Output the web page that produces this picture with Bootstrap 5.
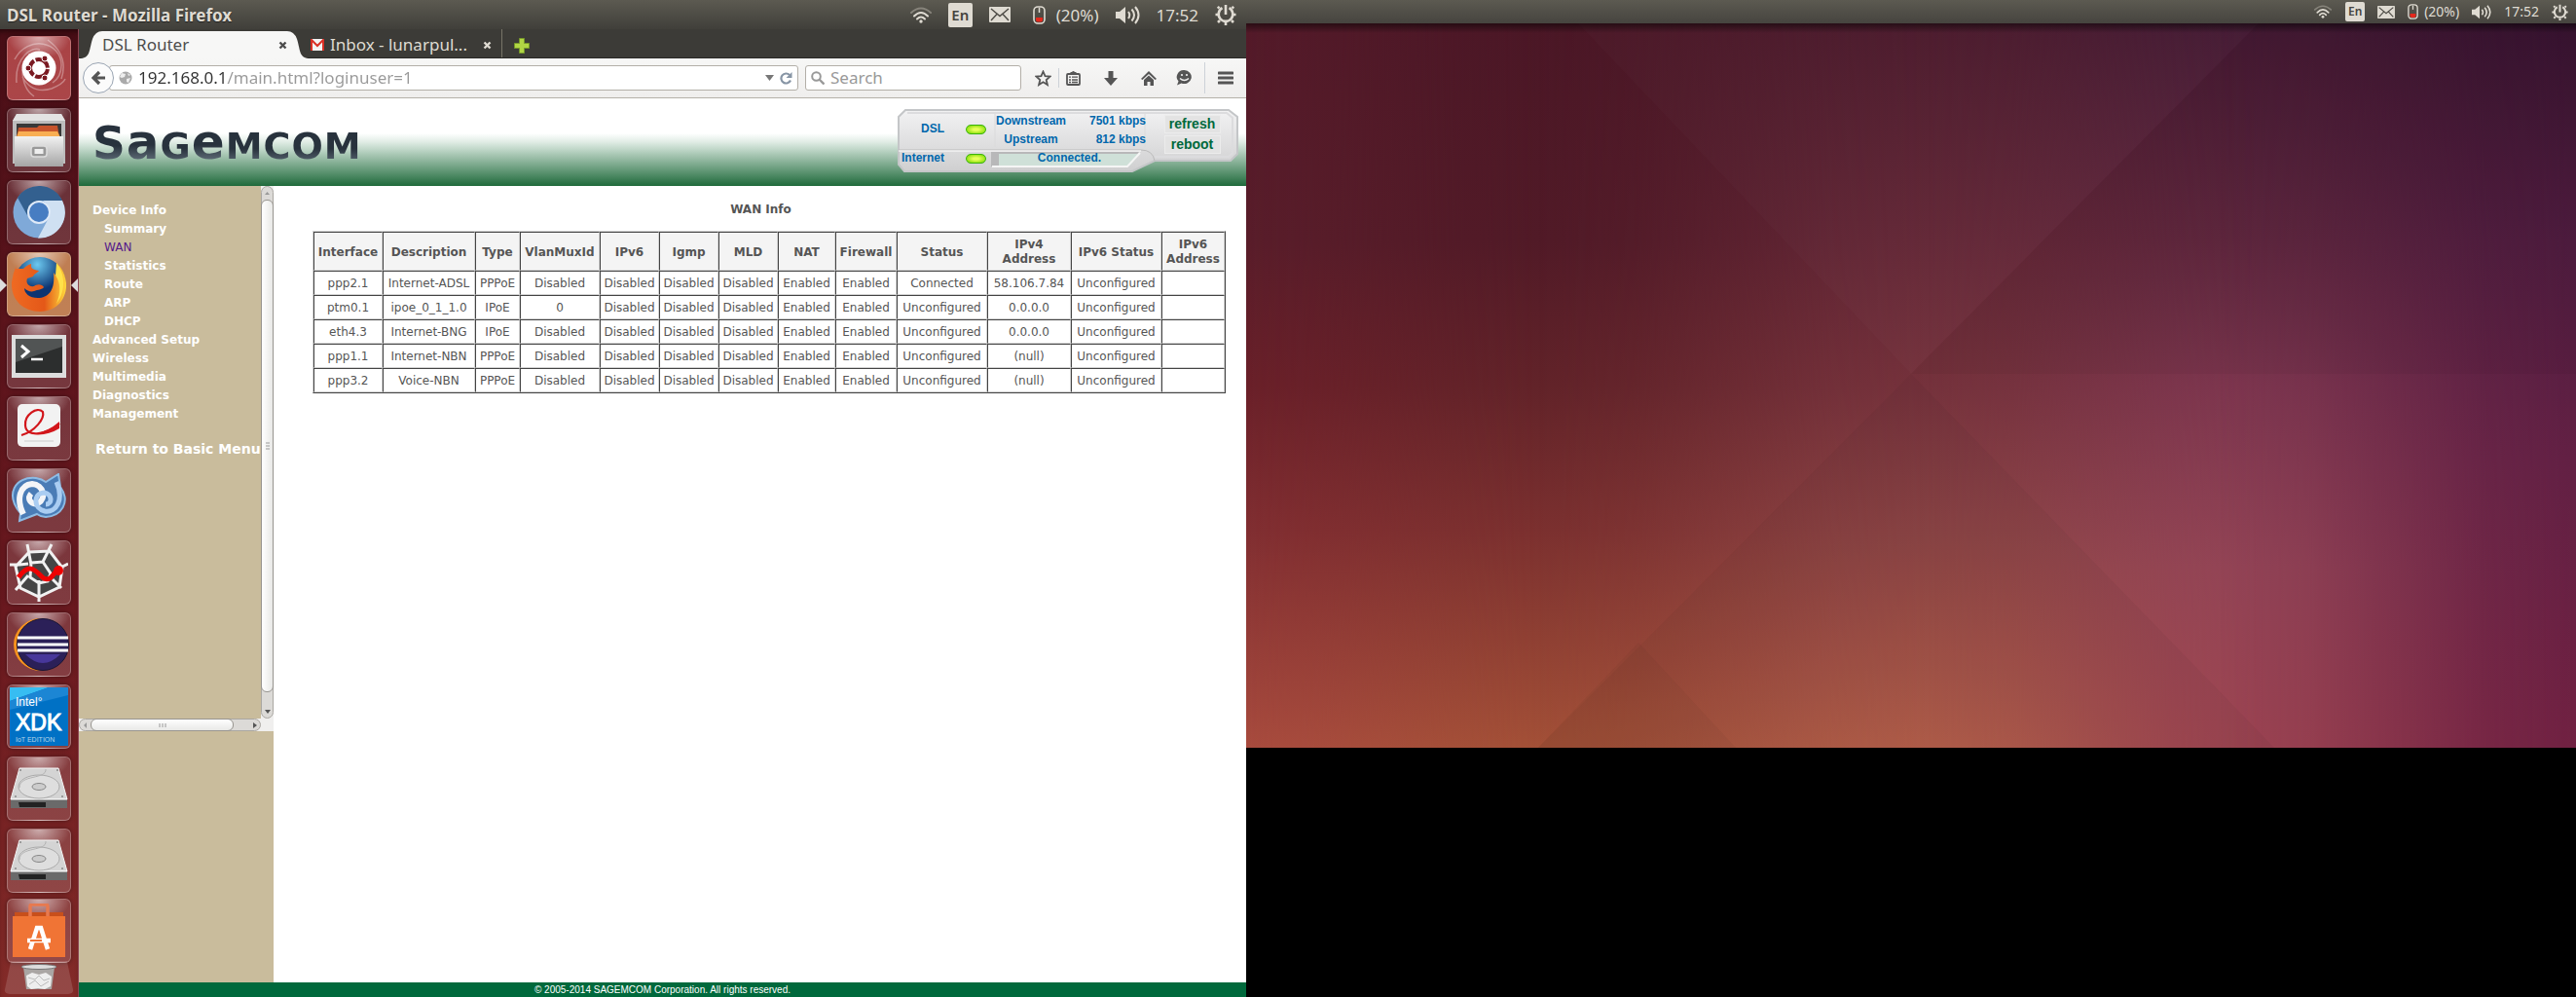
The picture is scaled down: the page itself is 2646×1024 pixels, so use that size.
<!DOCTYPE html>
<html lang="en">
<head>
<meta charset="utf-8">
<meta name="viewport" content="width=device-width, initial-scale=1">
<title>DSL Router - Mozilla Firefox</title>
<link href="https://cdn.jsdelivr.net/npm/bootstrap@5.3.0/dist/css/bootstrap.min.css" rel="stylesheet">
<style>
:root{--ui:"Noto Sans","Open Sans",sans-serif;--web:"DejaVu Sans",Verdana,sans-serif;--arial:"Liberation Sans",Arial,sans-serif}
body{background:#000;font-family:var(--ui);min-height:100vh}
button{font:inherit;color:inherit;background:none;border:0;padding:0}
svg{display:block;flex:none}
.desktop{display:grid;grid-template-columns:1280fr 1366fr;min-height:100vh}
.screen{display:flex;flex-direction:column;min-width:0}
/* top panels */
.panel{background:linear-gradient(#5c5a51,#403f3a);color:#dfdbd2;line-height:1;flex:none}
.panel-l{height:30px;font-size:17px;padding:0 10px 0 7px}
.panel-r{height:24px;font-size:14px;padding:0 8px;background:linear-gradient(#5c5a51,#46443f)}
.panel-l .tray{gap:17px}.panel-r .tray{gap:13px}
.panel-l .power{gap:11px;padding-left:6px}.panel-r .power{gap:6px}
.lang{background:#dfdbd2;color:#45443f;border-radius:2px;display:grid;place-items:center;font-weight:600}
.panel-l .lang{width:25px;height:25px;font-size:15px}.panel-r .lang{width:20px;height:20px;font-size:12px}
.wintitle{font-weight:700;text-shadow:0 1px 1px #222}
/* launcher */
.launcher{width:81px;flex:none;background:linear-gradient(#4a0f17,#5c141c 30%,#6a191f 60%,#832b28);border-right:1px solid #8d4552;padding:7px 0 0 7px;box-shadow:inset 0 6px 6px -4px #200508}
.launcher ul{display:flex;flex-direction:column;gap:8px;margin:0;padding:0;list-style:none}
.tile{position:relative;display:grid;place-items:center;width:66px;height:66px;border-radius:6px;border:1px solid #ffffff40;background:radial-gradient(ellipse 50% 36% at 50% 0,#ffffff99,#ffffff10),linear-gradient(#ffffff12,#ffffff18);box-shadow:0 0 5px #0006}
.tile-red{background-color:#9c2629}.tile-orange{background-color:#b56a38}
.tile-last{margin-top:-2px}
.tile-trash{height:34px;width:72px;margin:-10px 0 0 -3px;border:0;background:#ffffff24;clip-path:polygon(10% 0,90% 0,100% 100%,0 100%);box-shadow:none}
.pip{position:absolute;top:26px;border:7px solid transparent}
.pip-l{left:-8px;border-left-color:#ddd;border-right:0}
.pip-r{right:-8px;border-right-color:#ddd;border-left:0}
/* browser chrome */
.tabbar{height:30px;background:#3c3b37;color:#dfdbd2;font-size:17px;line-height:28px;border-bottom:1px solid #2a2926}
.btab{position:relative;display:flex;align-items:center}
.btab>*{position:relative}
.btab .tabshape{position:absolute;left:0;top:1px;width:100%;height:29px}
.btab-on{width:238px;padding:3px 24px 0 24px;color:#4c4c4c}
.btab-off{width:197px;gap:6px;padding:3px 10px 0 0;height:29px;border-right:1px solid #777468}
.navtools{height:41px;background:linear-gradient(#f7f7f6,#efeeed);border-bottom:1px solid #b5b1a9;padding:0 13px 0 4px;color:#555}
.urlbox,.searchbox{height:26px;background:#fff;border:1px solid #b3afa8;border-radius:3px;display:flex;align-items:center}
.urlbox{margin-left:-5px;padding:0 5px 0 9px;gap:6px;flex:1 1 0;min-width:0}
.searchbox{flex:0 1 222px;margin-left:7px;padding:0 5px;gap:6px}
.urlbox input,.searchbox input{border:0;outline:0;padding:0;flex:1 1 0;width:0;min-width:0;font-size:17px;line-height:24px;height:24px;background:none}
.urlbox input{color:transparent;background:linear-gradient(90deg,#333 92px,#999 92px);-webkit-background-clip:text;background-clip:text}
.searchbox input::placeholder{color:#999;opacity:1}
.backbtn{width:32px;height:32px;border-radius:50%;border:1px solid #9aa5b3;background:#fbfbfb;display:grid;place-items:center;z-index:1;flex:none}
.toolset{display:flex;align-items:center;margin-left:14px;gap:20px}
.toolset .pair{gap:7px}
.toolset .menugroup{gap:13px;margin-left:-8px}
.vline{width:1px;height:20px;background:#cdd2d8}
.menugroup .vline{height:32px}
/* router page */
.brandbar{height:90px;background:linear-gradient(#fff 0,#fff 40%,#dfece4 50%,#1f6a3b 100%);padding:11px 8px 0 14px}
.brandlogo{font-family:"DejaVu Sans",sans-serif;font-weight:700;line-height:54px;height:54px;margin-top:7px;font-size:38px;display:flex;align-items:baseline;color:#28323d;gap:1px}
.brandlogo .cap{font-size:47px}.brandlogo .low{font-size:50px}
.brandlogo span{background:linear-gradient(#28323d 55%,#5d6a75 85%);-webkit-background-clip:text;background-clip:text;color:transparent}
.statbox{position:relative;width:350px;height:65px;font:700 12px/17px var(--arial);color:#0067ac}
.statbox .plate{position:absolute;inset:0}
.statbox .inner{position:relative}
.statleft{width:255px;padding-top:4px}
.stattop{height:38px}.statlow{height:17px}
.lab{width:48px;text-align:right}.ledcell{width:50px;padding-left:22px}
.led{width:21px;height:10px;border-radius:5px;border:1px solid #3bb30d;background:radial-gradient(#e8ff5a 20%,#9be61a 70%,#4fc70c)}
.stattop dl{display:grid;grid-template-columns:78px 79px;margin:0}
.stattop dt{text-align:center;font-weight:700}.stattop dd{text-align:right;margin:0}
.statbtns{width:96px;padding-top:6px;gap:2px;color:#00693c;font-size:14px}
.statbtns button{width:58px;height:19px;line-height:17px;background:#e3e3e3;border:1px solid #ececec;font-weight:700}
.sidebar-col{width:200px;flex:none;background:#c9bc9c;font:700 12px/19px var(--web)}
.menuframe{display:grid;grid-template-columns:1fr 13px;grid-template-rows:547px 13px;background:#f0efee}
.menuview{background:#c9bc9c;overflow:hidden;padding:16px 0 0 14px;color:#fff;white-space:nowrap;min-width:0}
.menuview ul{list-style:none;margin:0;padding:0}.menuview ul ul{padding-left:12px}
.menuview a{color:#fff;text-decoration:none}
.menuview a.visited{color:#551a8b;font-weight:400}
.basic{display:block;font-size:14px;margin:17px 0 0 3px}
.sbar{background:#dcdad7;border:1px solid #aaa7a2;border-radius:7px;display:flex;align-items:center}
.sbar.vert{flex-direction:column}
.sbar .knob{background:linear-gradient(90deg,#fff,#e8e8e6);border:1px solid #989590;border-radius:6px;display:grid;place-items:center}
.vert .knob{width:13px;height:506px}.horiz .knob{height:13px;width:147px;background:linear-gradient(#fff,#e8e8e6)}
.sbar .cap-b{flex:none;width:11px;height:13px;display:grid;place-items:center}
.pagemain{background:#fff;flex:1;min-width:0;color:#555;font:12px/15px var(--web);padding:17px 20px 0 40px}
.pagemain h1{font:700 12px/15px var(--web);text-align:center;margin:0 18px 14px 0}
.wan-table{table-layout:fixed;width:938px;max-width:100%;border-collapse:separate;border-spacing:0;border:1px solid;border-color:#d3d3d3 #444 #444 #d3d3d3;text-align:center}
.wan-table th,.wan-table td{border:1px solid;border-color:#444 #d3d3d3 #d3d3d3 #444;padding:5px 2px 3px;height:25px}
.wan-table th{background:#f4f4f4;padding:5px 0 3px}
.pagefoot{height:15px;background:#00693c;color:#fff;font:10px/15px var(--arial);text-align:center}
.wallpaper{width:100%;height:auto;aspect-ratio:1366/744}
</style>
</head>
<body>
<svg width="0" height="0" class="position-absolute" aria-hidden="true">
<defs>
<symbol id="wifi" viewBox="0 0 22 17"><g fill="none" stroke-width="2" stroke-linecap="round"><path d="M1 6Q11-3 21 6" stroke="#87847b"/><path d="M4 9.500Q11 2.500 18 9.500M7 12.500Q11 8.500 15 12.500" stroke="#dfdbd2"/></g><circle cx="11" cy="15" r="1.700" fill="#dfdbd2"/></symbol>
<symbol id="mail" viewBox="0 0 22 16"><rect width="22" height="16" rx="1" fill="#dfdbd2"/><path d="M2 2l9 7.500L20 2M2 14l6-6.500M20 14l-6-6.500" fill="none" stroke="#4b4943" stroke-width="1.400"/></symbol>
<symbol id="mouse" viewBox="0 0 13 19"><rect x="1" y="1" width="11" height="17" rx="4" fill="none" stroke="#dfdbd2" stroke-width="1.600"/><path d="M6.500 2v5" stroke="#dfdbd2" stroke-width="1.500"/><path d="M3 12h7v3q-.5 1.500-2 1.500H5Q3.500 16.500 3 15z" fill="#e4281c"/></symbol>
<symbol id="sound" viewBox="0 0 25 21"><path d="M0 7h4l6-5v17l-6-5H0z" fill="#dfdbd2"/><path d="M13 7q2.500 3.500 0 7M16.500 4.500q5 6 0 12M20 2q7 8.500 0 17" fill="none" stroke="#dfdbd2" stroke-width="2"/></symbol>
<symbol id="gear" viewBox="0 0 22 22"><path d="M14.500 4.200A7.300 7.300 0 1 1 7.500 4.200" fill="none" stroke="#dfdbd2" stroke-width="2.600"/><path d="M11 1v10M4.500 4.500L2.800 2.800M17.500 4.500l1.700-1.700M3 11H.5M19 11h2.500M5 17l-2 2M17 17l2 2M11 19v3" stroke="#dfdbd2" stroke-width="2.600"/></symbol>
<linearGradient id="silver" x2="0" y2="1"><stop stop-color="#f2f2f2"/><stop offset="1" stop-color="#a5a5a5"/></linearGradient>
<symbol id="disk" viewBox="0 0 60 46"><path d="M10 2h40l9 32H1z" fill="#d4d4d4" stroke="#f5f5f5"/><path d="M1 34h58v9H1z" fill="#6a6a6a"/><path d="M1 34h58" stroke="#fff"/><path d="M9 37h28v5H10z" fill="#222"/><ellipse cx="30" cy="21" rx="21" ry="12" fill="#dedede" stroke="#aaa"/><ellipse cx="30" cy="21" rx="7" ry="3.500" fill="#ccc" stroke="#888"/><path d="M10 22C10 8 38 14 37 3" fill="none" stroke="#b2b2b2"/><g fill="#888"><circle cx="11" cy="4" r="1"/><circle cx="49" cy="4" r="1"/><circle cx="6" cy="31" r="1"/><circle cx="54" cy="31" r="1"/></g></symbol>
<symbol id="close" viewBox="0 0 9 9"><path d="M1.500 1.500l6 6m0-6l-6 6" stroke="currentColor" stroke-width="2.400"/></symbol>
</defs></svg>

<div class="desktop">
<div class="screen">
  <header class="panel panel-l d-flex align-items-center justify-content-between">
    <span class="wintitle">DSL Router - Mozilla Firefox</span>
    <div class="tray d-flex align-items-center">
      <svg width="22" height="17"><use href="#wifi"/></svg><span class="lang">En</span>
      <svg width="22" height="16"><use href="#mail"/></svg>
      <span class="power d-flex align-items-center"><svg width="13" height="19"><use href="#mouse"/></svg>(20%)</span>
      <svg width="25" height="21"><use href="#sound"/></svg><span>17:52</span>
      <svg width="22" height="22"><use href="#gear"/></svg>
    </div>
  </header>
  <div class="d-flex flex-grow-1">
    <nav class="launcher" aria-label="Launcher"><ul>
      <li><button class="tile tile-red" aria-label="Dash"><svg width="62" height="62" viewBox="0 0 62 62"><g fill="none" stroke="#ffffff55" stroke-width="1.500"><path d="M6 22C20-4 54 4 54 28q0 12-9 18M8 46C6 20 24 8 32 12M14 40q10 18 30 12 12-5 14-10M14 32q0 20 12 28M40 2q22 16 14 40"/></g><circle cx="31" cy="31" r="17.500" fill="#fff"/><circle cx="31" cy="31" r="9" fill="none" stroke="#7a1a22" stroke-width="4" stroke-dasharray="17 1.850" stroke-dashoffset="-1"/><g fill="#7a1a22" stroke="#fff"><circle cx="20" cy="31" r="3"/><circle cx="37" cy="21" r="3"/><circle cx="37" cy="41" r="3"/></g></svg></button></li>
      <li><button class="tile" aria-label="Files"><svg width="54" height="56" viewBox="0 0 54 56"><path d="M4 1h46l4 7v44H0V8z" fill="#bdbdbd"/><path d="M4 1h46l4 7H0z" fill="#e3e3e3"/><path d="M4 11h46v16H4z" fill="#383838"/><path d="M6 15h19l2-2h19l2 12H4z" fill="#c6542c"/><path d="M6 19h40l3 6H4z" fill="#f8ae52"/><path d="M2 24h50v31H2z" fill="url(#silver)"/><rect x="19" y="34" width="16" height="11" rx="3" fill="#999" stroke="#ddd" stroke-width="1.500"/><rect x="22.500" y="37" width="9" height="5" fill="#eee"/></svg></button></li>
      <li><button class="tile" aria-label="Chromium"><svg width="54" height="54" viewBox="0 0 54 54"><circle cx="27" cy="27" r="26.500" fill="#7fa9d8"/><path d="M5 12a26.500 26.500 0 0 1 46 3H27L15 30z" fill="#33608f"/><path d="M51 15a26.500 26.500 0 0 1-25 38.500L38 31q2-10-7-16z" fill="#cfe0f2"/><circle cx="27" cy="27" r="12" fill="#dfeaf8"/><circle cx="27" cy="27" r="10" fill="#477dc2"/></svg></button></li>
      <li><button class="tile tile-orange" aria-label="Firefox"><i class="pip pip-l"></i><i class="pip pip-r"></i><svg width="58" height="58" viewBox="0 0 58 58"><defs><radialGradient id="globe" cx=".45" cy=".15"><stop stop-color="#6cc9f0"/><stop offset="1" stop-color="#0c3472"/></radialGradient><linearGradient id="fur"><stop stop-color="#ef6a22"/><stop offset=".6" stop-color="#e45818"/><stop offset="1" stop-color="#ffd83c"/></linearGradient></defs><circle cx="30" cy="27" r="26" fill="url(#globe)"/><path d="M5 13L6 9Q2 18 1 27C0 46 14 57 30 57 48 57 58 43 57 28 56 18 52 11 47 7c3 8 1 11 0 14l-3-4c2 19-6 26-16 26-9 0-14-5-14-10 3 3 7 4 10 3 4-2 8-1 10-4-2-4-8-3-10-1-5 1-9-3-7-8l6-2c1-3 5-4 6-6-4-1-7-1-8-4V8c-4 1-6 3-8 5z" fill="url(#fur)"/><path d="M47 7c8 9 11 28 0 42 5-12 4-22-1-29z" fill="#ffe14a"/></svg></button></li>
      <li><button class="tile" aria-label="Terminal"><svg width="56" height="44" viewBox="0 0 56 44"><rect width="56" height="44" fill="#ddd"/><rect x="4" y="4" width="48" height="35" fill="#2c2e2e"/><path d="M4 4h48v8L4 28z" fill="#515454"/><path d="M10 11l7 6-7 6" fill="none" stroke="#fff" stroke-width="3"/><path d="M20 25h12" stroke="#fff" stroke-width="2.500"/></svg></button></li>
      <li><button class="tile" aria-label="Document viewer"><svg width="44" height="52" viewBox="0 0 44 52"><rect width="44" height="44" rx="5" y="1" fill="#f2f2f2"/><path d="M4 33C18 29 28 16 26 9 20 3 7 12 8 23c1 14 24 8 35-2" fill="none" stroke="#d2161b" stroke-width="2.200"/><path d="M43 19v7Q30 34 16 32 32 29 43 19z" fill="#d2161b"/><path d="M7 39h30" stroke="#ccc"/></svg></button></li>
      <li><button class="tile" aria-label="MonoDevelop"><svg width="58" height="56" viewBox="0 0 58 56"><path d="M9 49L10 41C-6 22 4 3 26 5q6 1 10 4L49 1l2 13C62 30 52 44 36 45q-5 0-9-3z" fill="#4a7cb6" stroke="#8dbbe4" stroke-width="2"/><path d="M13 42C5 26 10 12 22 11c12 1 15 15 6 20-7 2-12-5-7-10" fill="none" stroke="#f3f5f8" stroke-width="6"/><path d="M47 9c8 18 0 32-12 30-12-3-12-18-1-19 9 1 9 12 2 12" fill="none" stroke="#aacdf2" stroke-width="5"/></svg></button></li>
      <li><button class="tile" aria-label="Spyder"><svg width="60" height="60" viewBox="0 0 60 60"><path d="M20 9L41 8l13 17-3 20-21 10-19-9-5-22z" fill="#454545"/><path d="M18 1l4 21M43 1l-9 18M0 22h10l9-1M60 21l-6 3M6 48l13-15M53 46l-9-9M30 60V38M20 9L41 8l13 17-3 20-21 10-19-9-5-22zM22 20l12-1 8 12-3 8-9 2-9-6z" fill="none" stroke="#f1f1f1" stroke-width="3"/><path d="M9 35C22 17 28 31 35 36c9 4 9-8 16-8" fill="none" stroke="#ee0202" stroke-width="5"/><circle cx="50" cy="28" r="5" fill="#ee0202"/></svg></button></li>
      <li><button class="tile" aria-label="Eclipse"><svg width="62" height="56" viewBox="0 0 62 56"><path d="M33 1A28 27 0 1 0 33 55 30 28 0 0 1 33 1z" fill="#f7921e"/><circle cx="35" cy="28" r="26.500" fill="#2b2058" stroke="#191533"/><path d="M17 38q18 18 36 0z" fill="#47379a"/><path d="M9 21h52M9 28h52M9 34h52" stroke="#fff" stroke-width="2.800"/></svg></button></li>
      <li><button class="tile" aria-label="Intel XDK"><svg width="62" height="62" viewBox="0 0 62 62"><path d="M1 1h60v60H1z" fill="#0071c5"/><path d="M1 1h40L1 15z" fill="#37bdf2"/><path d="M41 1h20v8L1 24V15z" fill="#1c86d4"/><g font-family="Liberation Sans" fill="#fff" stroke="none"><text x="7" y="20" font-size="12">Intel°</text><text x="7" y="45" font-size="23" stroke="#fff">XDK</text><text x="7" y="57" font-size="7" fill="#b7d5e8">IoT EDITION</text></g></svg></button></li>
      <li><button class="tile" aria-label="Drive 1"><svg width="60" height="46"><use href="#disk"/></svg></button></li>
      <li><button class="tile" aria-label="Drive 2"><svg width="60" height="46"><use href="#disk"/></svg></button></li>
      <li class="tile-last"><button class="tile" aria-label="Software Center"><svg width="54" height="56" viewBox="0 0 54 56"><path d="M2 9h50v10H2z" fill="#c84f1b"/><path d="M18 14V3q0-2 2-2h14q2 0 2 2v11" fill="none" stroke="#e7794f" stroke-width="3.500"/><path d="M0 13h54v42H0z" fill="#f07435"/><path d="M18 47l7-22h4l7 22M15 38h24" fill="none" stroke="#fff" stroke-width="4.500"/><path d="M18 38h12" stroke="#f07435" stroke-width="2"/></svg></button></li>
      <li><button class="tile tile-trash" aria-label="Trash"><svg width="38" height="30" viewBox="0 0 38 30"><path d="M3 4h32l-3 23H6z" fill="#aaa6a4"/><ellipse cx="19" cy="4" rx="18" ry="2.500" fill="#ddd" stroke="#777"/><path d="M6 13l6-3 7 2 7-2 6 4-1 10-6 3-7-1-7 1-4-3z" fill="#eee"/><path d="M8 15l7 2 4-4 5 5 6-2M9 22l6-4 6 6 8-5" fill="none" stroke="#bbb"/></svg></button></li>
    </ul></nav>

    <div class="d-flex flex-column flex-fill overflow-hidden">
      <div class="tabbar d-flex">
        <div class="btab btab-on">
          <svg class="tabshape" viewBox="0 0 238 29" preserveAspectRatio="none"><path d="M0 29C12 29 10 22 14 9Q17 1 24 1H214Q221 1 224 9C228 22 226 29 238 29z" fill="#f7f7f6"/></svg>
          <span class="flex-grow-1">DSL Router</span><button aria-label="Close tab"><svg width="9" height="9"><use href="#close"/></svg></button>
        </div>
        <div class="btab btab-off">
          <svg width="14" height="12" viewBox="0 0 14 12"><path d="M0 0h14v12H0z" fill="#f3f3f3"/><path d="M1 12V1l6 6 6-6v11" fill="none" stroke="#d93025" stroke-width="2"/></svg>
          <span class="flex-grow-1 text-nowrap">Inbox - lunarpul...</span><button aria-label="Close tab"><svg width="9" height="9"><use href="#close"/></svg></button>
        </div>
        <button class="ps-2 ms-1 pt-1" aria-label="New tab"><svg width="16" height="16" viewBox="0 0 16 16"><path d="M5.500.5h5v5h5v5h-5v5h-5v-5h-5v-5h5z" fill="#b1d644" stroke="#76982a"/></svg></button>
      </div>
      <div class="navtools d-flex align-items-center">
        <button class="backbtn" aria-label="Back"><svg width="16" height="16" viewBox="0 0 16 16"><path d="M15 8H3M9 2L3 8l6 6" fill="none" stroke="#555" stroke-width="3.200"/></svg></button>
        <div class="urlbox"><svg width="14" height="14" viewBox="0 0 14 14"><circle cx="7" cy="7" r="6.500" fill="#aaa"/><path d="M3 2l4 1-1 3-3 1-2-1zM8 8l4-1-2 5-2-1zM9 2l3 2-2 1z" fill="#eee"/></svg>
          <input type="text" aria-label="Address" value="192.168.0.1/main.html?loginuser=1">
          <svg width="9" height="6" viewBox="0 0 9 6"><path d="M0 0h9L4.500 6z" fill="#777"/></svg>
          <button aria-label="Reload"><svg width="13" height="13" viewBox="0 0 13 13"><path d="M11 8.500A5 5 0 1 1 10 3" fill="none" stroke="#8795a5" stroke-width="2.200"/><path d="M12.500 0v6h-6z" fill="#8795a5"/></svg></button></div>
        <div class="searchbox"><svg width="14" height="14" viewBox="0 0 14 14"><circle cx="5.500" cy="5.500" r="4.300" fill="none" stroke="#999" stroke-width="2"/><path d="M8.500 8.500l5 5" stroke="#999" stroke-width="2.400"/></svg><input type="search" aria-label="Search" placeholder="Search"></div>
        <div class="toolset">
          <div class="pair d-flex align-items-center"><button aria-label="Bookmark"><svg width="17" height="17" viewBox="0 0 17 17"><path d="M8.500 1.500l2 4.700 5 .4-3.800 3.400 1.200 5-4.400-2.700L4.100 15l1.200-5L1.500 6.600l5-.4z" fill="none" stroke="#555" stroke-width="1.800"/></svg></button><i class="vline"></i>
          <button aria-label="Bookmarks list"><svg width="15" height="16" viewBox="0 0 15 16"><rect x="1" y="4" width="13" height="11" rx="1" fill="none" stroke="#555" stroke-width="1.800"/><path d="M4.500 4V2H6q1.500-2 3 0h1.500v2z" fill="#555"/><path d="M3 7.200h2m1 0h6M3 10h2m1 0h6M3 12.500h2m1 0h6" stroke="#555" stroke-width="1.300"/></svg></button></div>
          <button aria-label="Downloads" class="ms-1"><svg width="14" height="15" viewBox="0 0 14 15"><path d="M4.500 0h5v7H14l-7 8-7-8h4.500z" fill="#555"/></svg></button>
          <button aria-label="Home" class="ms-1"><svg width="16" height="15" viewBox="0 0 16 15"><path d="M0 8l8-8 8 8-1.500 1L8 3 1.500 9z" fill="#555"/><path d="M3 9l5-4.500L13 9v6H9.500v-4h-3v4H3z" fill="#555"/></svg></button>
          <button aria-label="Chat"><svg width="17" height="16" viewBox="0 0 17 16"><path d="M8.500 0a7.500 7 0 1 1-3 13.500L1 15.500l1.500-4A7.500 7 0 0 1 8.500 0z" fill="#555"/><circle cx="6" cy="5" r="1.100" fill="#eee"/><circle cx="11" cy="5" r="1.100" fill="#eee"/><path d="M4 8.500q4.500 4 9 0" stroke="#eee" stroke-width="1.500" fill="none"/></svg></button>
          <div class="menugroup d-flex align-items-center"><i class="vline"></i>
          <button aria-label="Menu"><svg width="16" height="14" viewBox="0 0 16 14"><path d="M1 2h14M1 7h14M1 12h14" stroke="#555" stroke-width="3" stroke-linecap="round"/></svg></button></div>
        </div>
      </div>

      <div class="brandbar d-flex justify-content-between align-items-start">
        <div class="brandlogo" role="img" aria-label="Sagemcom"><span class="cap">S</span><span class="low">a</span><span>G</span><span class="low">e</span><span>M</span><span>C</span><span>O</span><span>M</span></div>
        <div class="statbox">
          <svg class="plate" width="350" height="65" viewBox="0 0 350 65"><defs><linearGradient id="plateg" x2="0" y2="1"><stop stop-color="#f2f2f3"/><stop offset="1" stop-color="#cfcfd0"/></linearGradient></defs>
            <path d="M8 1H340L349 8V46L342 53H264L241 64H7L1 57V8z" fill="url(#plateg)" stroke="#c4c6c8" stroke-width="2"/><path d="M10 4H338L344 9V45L340 49H264" fill="none" stroke="#dcdcde" stroke-width="2"/>
            <path d="M1 42H250Q262 42 264 53" fill="none" stroke="#bbb"/><path d="M1 43H250" stroke="#fff"/><path d="M96 44h152l-12 15H96z" fill="#b8b8b9"/><path d="M104 46h144l-9 12H104z" fill="#cfe0d8"/><path d="M97 59h139l13-14" fill="none" stroke="#f5f5f5" stroke-width="2"/><path d="M100 5v34M254 5v34" stroke="#dadadb"/></svg>
          <div class="inner d-flex">
            <div class="statleft">
              <div class="stattop d-flex"><span class="lab pt-2">DSL</span><span class="ledcell pt-2 mt-1"><i class="led d-block"></i></span><dl><dt>Downstream</dt><dd>7501 kbps</dd><dt>Upstream</dt><dd>812 kbps</dd></dl></div>
              <div class="statlow d-flex align-items-center"><span class="lab">Internet</span><span class="ledcell"><i class="led d-block"></i></span><span class="flex-grow-1 text-center">Connected.</span></div>
            </div>
            <div class="statbtns d-flex flex-column align-items-center"><button>refresh</button><button>reboot</button></div>
          </div>
        </div>
      </div>

      <div class="d-flex flex-grow-1">
        <aside class="sidebar-col">
          <div class="menuframe">
            <nav class="menuview"><ul>
              <li><a href="#">Device Info</a><ul><li><a href="#">Summary</a></li><li><a href="#" class="visited">WAN</a></li><li><a href="#">Statistics</a></li><li><a href="#">Route</a></li><li><a href="#">ARP</a></li><li><a href="#">DHCP</a></li></ul></li>
              <li><a href="#">Advanced Setup</a></li><li><a href="#">Wireless</a></li><li><a href="#">Multimedia</a></li><li><a href="#">Diagnostics</a></li><li><a href="#">Management</a></li></ul>
              <a href="#" class="basic">Return to Basic Menu</a></nav>
            <div class="sbar vert"><i class="cap-b"><svg width="5" height="3"><path d="M0 3h5L2.500 0z" fill="#999"/></svg></i><i class="knob"><svg width="4" height="8"><path d="M0 1h4M0 4h4M0 7h4" stroke="#999"/></svg></i><i class="cap-b mt-auto"><svg width="6" height="4"><path d="M0 0h6L3 4z" fill="#555"/></svg></i></div>
            <div class="sbar horiz"><i class="cap-b"><svg width="3" height="6"><path d="M3 0v6L0 3z" fill="#999"/></svg></i><i class="knob"><svg width="8" height="4"><path d="M1 0v4M4 0v4M7 0v4" stroke="#999"/></svg></i><i class="cap-b ms-auto"><svg width="4" height="6"><path d="M0 0v6l4-3z" fill="#555"/></svg></i></div>
            <div></div>
          </div>
        </aside>
        <main class="pagemain">
          <h1>WAN Info</h1>
          <table class="wan-table">
            <colgroup><col style="width:71px"><col style="width:95px"><col style="width:46px"><col style="width:82px"><col style="width:61px"><col style="width:61px"><col style="width:61px"><col style="width:59px"><col style="width:63px"><col style="width:93px"><col style="width:86px"><col style="width:93px"><col style="width:65px"></colgroup>
            <thead><tr><th>Interface</th><th>Description</th><th>Type</th><th>VlanMuxId</th><th>IPv6</th><th>Igmp</th><th>MLD</th><th>NAT</th><th>Firewall</th><th>Status</th><th>IPv4 Address</th><th>IPv6 Status</th><th>IPv6 Address</th></tr></thead>
            <tbody>
            <tr><td>ppp2.1</td><td>Internet-ADSL</td><td>PPPoE</td><td>Disabled</td><td>Disabled</td><td>Disabled</td><td>Disabled</td><td>Enabled</td><td>Enabled</td><td>Connected</td><td>58.106.7.84</td><td>Unconfigured</td><td></td></tr>
            <tr><td>ptm0.1</td><td>ipoe_0_1_1.0</td><td>IPoE</td><td>0</td><td>Disabled</td><td>Disabled</td><td>Disabled</td><td>Enabled</td><td>Enabled</td><td>Unconfigured</td><td>0.0.0.0</td><td>Unconfigured</td><td></td></tr>
            <tr><td>eth4.3</td><td>Internet-BNG</td><td>IPoE</td><td>Disabled</td><td>Disabled</td><td>Disabled</td><td>Disabled</td><td>Enabled</td><td>Enabled</td><td>Unconfigured</td><td>0.0.0.0</td><td>Unconfigured</td><td></td></tr>
            <tr><td>ppp1.1</td><td>Internet-NBN</td><td>PPPoE</td><td>Disabled</td><td>Disabled</td><td>Disabled</td><td>Disabled</td><td>Enabled</td><td>Enabled</td><td>Unconfigured</td><td>(null)</td><td>Unconfigured</td><td></td></tr>
            <tr><td>ppp3.2</td><td>Voice-NBN</td><td>PPPoE</td><td>Disabled</td><td>Disabled</td><td>Disabled</td><td>Disabled</td><td>Enabled</td><td>Enabled</td><td>Unconfigured</td><td>(null)</td><td>Unconfigured</td><td></td></tr>
            </tbody>
          </table>
        </main>
      </div>
      <footer class="pagefoot">© 2005-2014 SAGEMCOM Corporation. All rights reserved.</footer>
    </div>
  </div>
</div>

<div class="screen">
  <header class="panel panel-r d-flex align-items-center justify-content-end">
    <div class="tray d-flex align-items-center">
      <svg width="20" height="14"><use href="#wifi"/></svg><span class="lang">En</span>
      <svg width="18" height="13"><use href="#mail"/></svg>
      <span class="power d-flex align-items-center"><svg width="11" height="16"><use href="#mouse"/></svg>(20%)</span>
      <svg width="20" height="17"><use href="#sound"/></svg><span>17:52</span>
      <svg width="17" height="17"><use href="#gear"/></svg>
    </div>
  </header>
  <svg class="wallpaper" viewBox="0 0 1366 744" preserveAspectRatio="none" aria-hidden="true">
    <defs>
      <linearGradient id="c1" x2="0" y2="1"><stop stop-color="#531a29"/><stop offset=".3" stop-color="#591d2a"/><stop offset=".5" stop-color="#6a2029"/><stop offset=".7" stop-color="#812e31"/><stop offset="1" stop-color="#a84b3e"/></linearGradient>
      <linearGradient id="c2" x2="0" y2="1"><stop stop-color="#4b1726"/><stop offset=".3" stop-color="#511a27"/><stop offset=".5" stop-color="#622329"/><stop offset=".7" stop-color="#7b302f"/><stop offset="1" stop-color="#a35037"/></linearGradient>
      <linearGradient id="c3" x2="0" y2="1"><stop stop-color="#4b1a2c"/><stop offset=".3" stop-color="#632736"/><stop offset=".5" stop-color="#75323c"/><stop offset=".7" stop-color="#8c4445"/><stop offset="1" stop-color="#b45e4b"/></linearGradient>
      <linearGradient id="c4" x2="0" y2="1"><stop stop-color="#441a33"/><stop offset=".3" stop-color="#612840"/><stop offset=".5" stop-color="#7d364f"/><stop offset=".75" stop-color="#934456"/><stop offset="1" stop-color="#9c4452"/></linearGradient>
      <linearGradient id="c5" x2="0" y2="1"><stop stop-color="#381330"/><stop offset=".3" stop-color="#501d40"/><stop offset=".6" stop-color="#622044"/><stop offset="1" stop-color="#702142"/></linearGradient>
      <linearGradient id="fade"><stop stop-color="#000"/><stop offset=".25" stop-color="#282828"/><stop offset=".5" stop-color="#808080"/><stop offset=".75" stop-color="#d7d7d7"/><stop offset="1" stop-color="#fff"/></linearGradient>
      <linearGradient id="topshade" x2="0" y2="1"><stop stop-opacity=".5"/><stop offset="1" stop-opacity="0"/></linearGradient>
      <mask id="m2" maskUnits="userSpaceOnUse" x="0" y="0" width="1366" height="744"><rect width="300" height="744" fill="url(#fade)"/><rect x="300" width="1066" height="744" fill="#fff"/></mask>
      <mask id="m3" maskUnits="userSpaceOnUse" x="0" y="0" width="1366" height="744"><rect x="300" width="400" height="744" fill="url(#fade)"/><rect x="700" width="666" height="744" fill="#fff"/></mask>
      <mask id="m4" maskUnits="userSpaceOnUse" x="0" y="0" width="1366" height="744"><rect x="700" width="340" height="744" fill="url(#fade)"/><rect x="1040" width="326" height="744" fill="#fff"/></mask>
      <mask id="m5" maskUnits="userSpaceOnUse" x="0" y="0" width="1366" height="744"><rect x="1000" width="366" height="744" fill="url(#fade)"/></mask>
    </defs>
    <rect width="1366" height="744" fill="url(#c1)"/><rect width="1366" height="744" fill="url(#c2)" mask="url(#m2)"/><rect width="1366" height="744" fill="url(#c3)" mask="url(#m3)"/><rect width="1366" height="744" fill="url(#c4)" mask="url(#m4)"/><rect width="1366" height="744" fill="url(#c5)" mask="url(#m5)"/>
    <path d="M683 360L341 0H1040z" fill="#fff" opacity=".015"/><path d="M683 360L300 744H1056z" fill="#102010" opacity=".045"/><path d="M683 360L1040 0H1366V360z" fill="#000" opacity=".04"/><path d="M403 636L503 744H300z" fill="#102010" opacity=".04"/>
    <rect width="1366" height="10" fill="url(#topshade)"/>
  </svg>
</div>
</div>
<script src="https://cdn.jsdelivr.net/npm/bootstrap@5.3.0/dist/js/bootstrap.bundle.min.js"></script>
</body>
</html>
